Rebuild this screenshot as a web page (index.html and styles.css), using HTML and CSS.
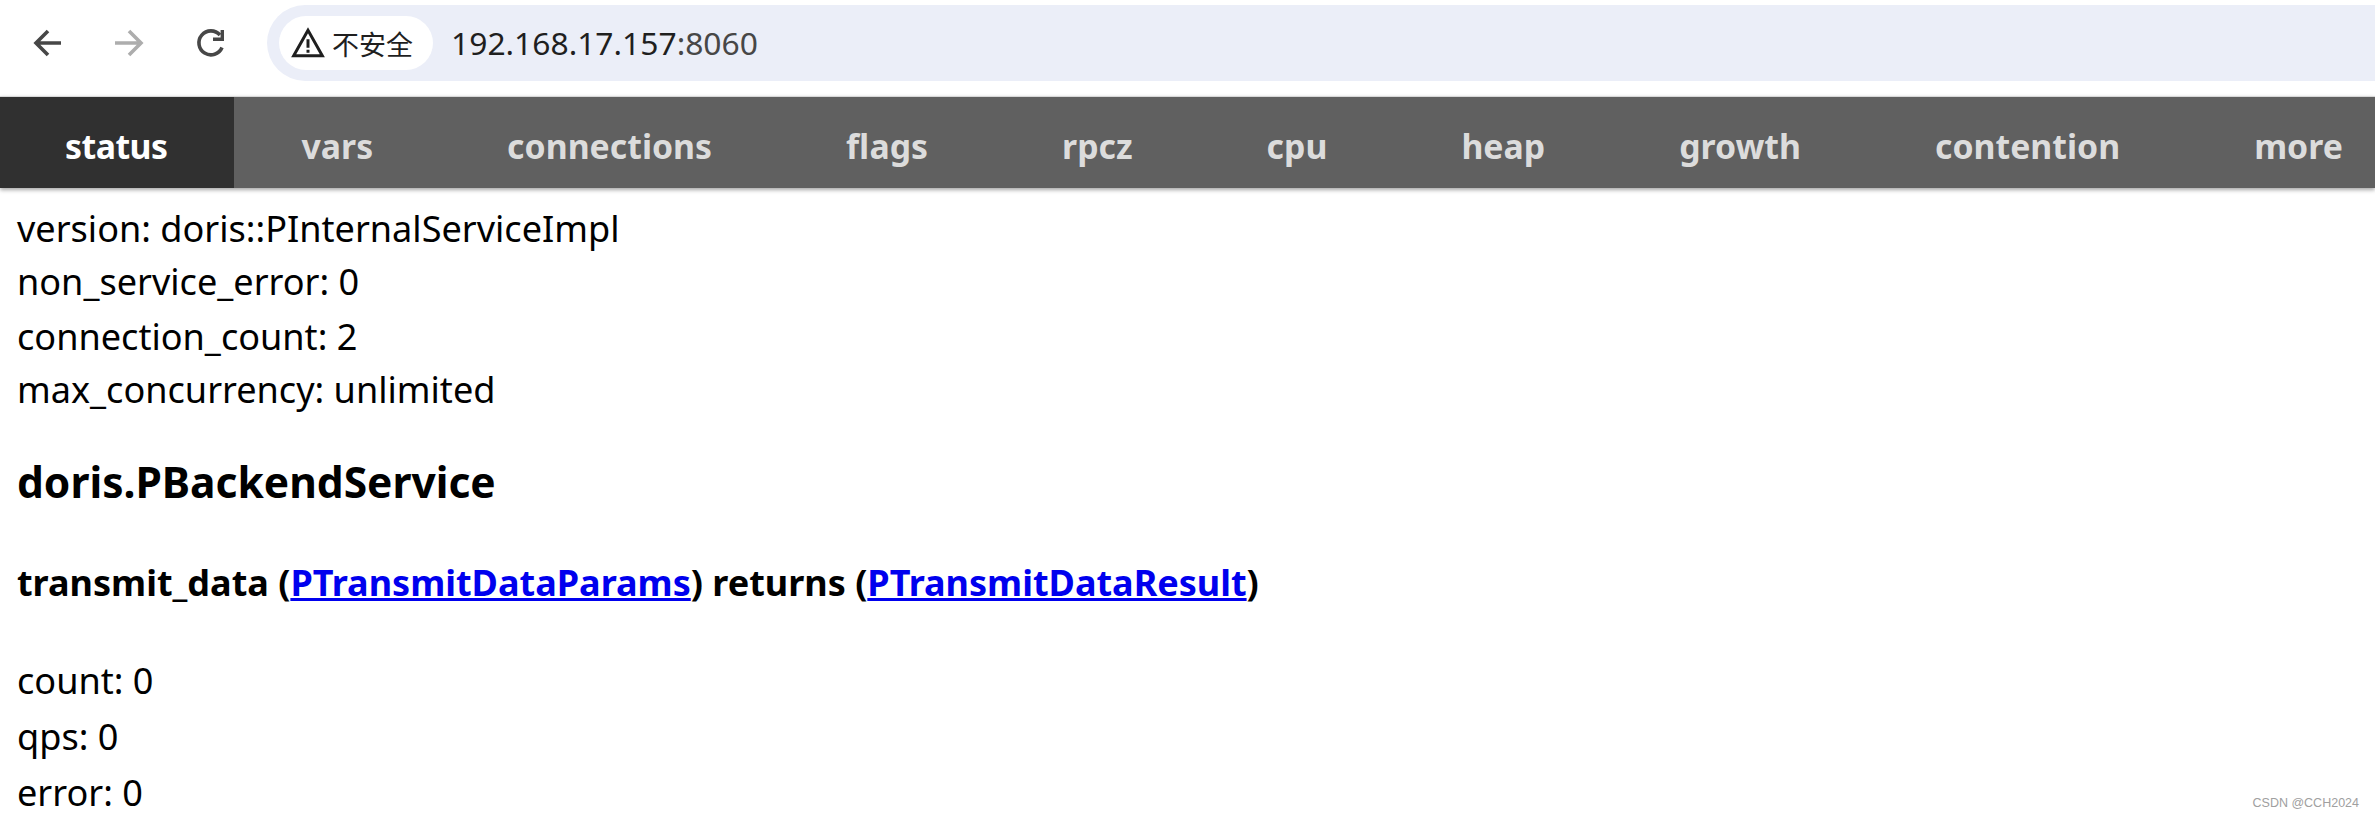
FILE: index.html
```html
<!DOCTYPE html>
<html lang="en">
<head>
  <meta charset="utf-8">
  <title>192.168.17.157:8060</title>
  <link rel="stylesheet" href="styles.css">
</head>
<body>

  <div class="toolbar">
    <svg class="tool-icon" viewBox="0 0 32 32"><path d="M29 16H5M16 4 4 16l12 12" fill="none" stroke="#474747" stroke-width="3.6"/></svg>
    <svg class="tool-icon" viewBox="0 0 32 32"><path d="M3 16h25M17 4l12 12-12 12" fill="none" stroke="#adadad" stroke-width="3.6"/></svg>
    <svg class="tool-icon reload" viewBox="0 0 32 32"><path d="M27 20.500A12 12 0 1 1 25 8" fill="none" stroke="#474747" stroke-width="3.600"/><path d="M29 3v11H18v-3.400h7.600V3z" fill="#474747"/></svg>
    <div class="address-bar">
      <div class="security-chip">
        <svg class="warn-icon" viewBox="0 0 32 32"><path d="M16 4 2.500 28h27z" fill="none" stroke="#1f1f1f" stroke-width="2.800"/><path d="M14.600 12.500h2.800v8h-2.800zM14.600 22.300h2.800v2.900h-2.800z" fill="#1f1f1f"/></svg>
        <span>不安全</span>
      </div>
      <span class="url">192.168.17.157<span class="url-port">:8060</span></span>
    </div>
  </div>

  <nav class="tabs">
    <a class="tab active">status</a>
    <a class="tab">vars</a>
    <a class="tab">connections</a>
    <a class="tab">flags</a>
    <a class="tab">rpcz</a>
    <a class="tab">cpu</a>
    <a class="tab">heap</a>
    <a class="tab">growth</a>
    <a class="tab">contention</a>
    <a class="tab">more</a>
  </nav>

  <div class="content">
    <div class="row">version: doris::PInternalServiceImpl</div>
    <div class="row">non_service_error: 0</div>
    <div class="row row-gap">connection_count: 2</div>
    <div class="row">max_concurrency: unlimited</div>

    <h2>doris.PBackendService</h2>
    <h3>transmit_data (<a href="#">PTransmitDataParams</a>) returns (<a href="#">PTransmitDataResult</a>)</h3>

    <div class="row row-wide">count: 0</div>
    <div class="row row-wide">qps: 0</div>
    <div class="row row-wide">error: 0</div>
  </div>

  <div class="watermark">CSDN @CCH2024</div>

</body>
</html>
```

FILE: styles.css
```css
html, body {
  height: 100%;
}

body {
  margin: 0;
  overflow: hidden;
  background: #fff;
  color: #000;
  font-family: "Noto Sans", "Liberation Sans", sans-serif;
}

.toolbar {
  display: flex;
  align-items: center;
  height: 96px;
  padding: 0 0 10px 32px;
  box-sizing: border-box;
}

.tool-icon {
  width: 32px;
  height: 32px;
  margin-right: 48px;
  flex: none;
}

.tool-icon.reload {
  margin: 0 40px 0 3px;
}

.address-bar {
  display: flex;
  align-items: center;
  flex: 1;
  height: 76px;
  padding-left: 12px;
  background: #ebeef8;
  border-radius: 38px 0 0 38px;
}

.security-chip {
  display: flex;
  align-items: center;
  height: 54px;
  padding: 0 20px 0 12px;
  background: #fff;
  border-radius: 27px;
  font-family: "Noto Sans CJK SC", sans-serif;
  font-size: 27px;
  color: #1f1f1f;
}

.warn-icon {
  width: 34px;
  height: 34px;
  margin-right: 7px;
}

.url {
  margin: 0 0 2px 18px;
  font-size: 31.8px;
  color: #1f1f1f;
}

.url-port {
  color: #474747;
}

.tabs {
  display: flex;
  height: 91px;
  border-top: 1px solid #d8d8d8;
  background: #606060;
  box-shadow: 0 2px 4px rgba(0, 0, 0, 0.35);
}

.tab {
  display: flex;
  align-items: center;
  padding: 6px 67px 0;
  font-size: 33.8px;
  font-weight: bold;
  color: #dcdcdc;
}

.tab.active {
  padding: 6px 67px 0 65px;
  background: #303030;
  color: #fff;
  letter-spacing: -0.5px;
}

.content {
  padding: 14px 17px 0;
}

.row {
  font-size: 36.1px;
  line-height: 53px;
}

.row-gap {
  margin-top: 2px;
}

.row-wide {
  line-height: 56px;
}

h2 {
  margin: 38px 0 0;
  font-size: 42.500px;
  line-height: 56px;
}

h3 {
  margin: 49px 0 45px;
  font-size: 36px;
  line-height: 48px;
}

a {
  color: #0000ee;
}

.watermark {
  position: absolute;
  right: 16px;
  bottom: 8px;
  font-family: "Liberation Sans", sans-serif;
  font-size: 12.500px;
  color: #a0a0a0;
}
```
